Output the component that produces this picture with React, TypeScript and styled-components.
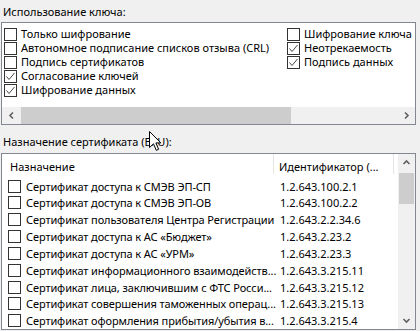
import styled, { createGlobalStyle } from 'styled-components'

const GlobalStyle = createGlobalStyle`
  body {
    margin: 0;
    background: #f0f0f0;
    font-family: "Noto Sans", "Open Sans", sans-serif;
    font-size: 11px;
    color: #000;
  }
`

const usageLeft = [
  { label: 'Только шифрование', checked: false },
  { label: 'Автономное подписание списков отзыва (CRL)', checked: false },
  { label: 'Подпись сертификатов', checked: false },
  { label: 'Согласование ключей', checked: true },
  { label: 'Шифрование данных', checked: true }
]

const usageRight = [
  { label: 'Шифрование ключа', checked: false },
  { label: 'Неотрекаемость', checked: true },
  { label: 'Подпись данных', checked: true }
]

const purposes = [
  ['Сертификат доступа к СМЭВ ЭП-СП', '1.2.643.100.2.1'],
  ['Сертификат доступа к СМЭВ ЭП-ОВ', '1.2.643.100.2.2'],
  ['Сертификат пользователя Центра Регистрации', '1.2.643.2.2.34.6'],
  ['Сертификат доступа к АС «Бюджет»', '1.2.643.2.23.2'],
  ['Сертификат доступа к АС «УРМ»', '1.2.643.2.23.3'],
  ['Сертификат информационного взаимодейств...', '1.2.643.3.215.11'],
  ['Сертификат лица, заключившим с ФТС Росси...', '1.2.643.3.215.12'],
  ['Сертификат совершения таможенных операц...', '1.2.643.3.215.13'],
  ['Сертификат оформления прибытия/убытия в...', '1.2.643.3.215.4']
]

function Check ({ checked }: { checked: boolean }) {
  return (
    <Box>
      {checked && (
        <svg width='11' height='11' viewBox='0 0 11 11'>
          <polyline points='1.5,5.5 4,8.5 9.5,2' fill='none' stroke='#4a4a4a' strokeWidth='1' />
        </svg>
      )}
    </Box>
  )
}

function Arrow ({ dir }: { dir: 'left' | 'right' | 'up' | 'down' }) {
  const pts = {
    left: '6,1.5 3,4.5 6,7.5',
    right: '3,1.5 6,4.5 3,7.5',
    up: '1.5,6 4.5,3 7.5,6',
    down: '1.5,3 4.5,6 7.5,3'
  }[dir]
  return (
    <svg width='9' height='9' viewBox='0 0 9 9'>
      <polyline points={pts} fill='none' stroke='#606060' strokeWidth='1.6' />
    </svg>
  )
}

export default function App () {
  return (
    <Page>
      <GlobalStyle />
      <GroupLabel>Использование ключа:</GroupLabel>
      <UsageBox>
        <UsageGrid>
          <Column>
            {usageLeft.map(i => (
              <UsageRow key={i.label}>
                <Check checked={i.checked} />
                <span>{i.label}</span>
              </UsageRow>
            ))}
          </Column>
          <Column>
            {usageRight.map(i => (
              <UsageRow key={i.label}>
                <Check checked={i.checked} />
                <span>{i.label}</span>
              </UsageRow>
            ))}
          </Column>
        </UsageGrid>
        <HScroll>
          <ScrollButton><Arrow dir='left' /></ScrollButton>
          <HThumb />
          <ScrollButton><Arrow dir='right' /></ScrollButton>
        </HScroll>
      </UsageBox>

      <GroupLabel $second>Назначение сертификата (EKU):</GroupLabel>
      <ListBox>
        <ListContent>
          <Header>
            <HeaderCell $width={272} $pad={8}>Назначение</HeaderCell>
            <HeaderCell $width={120} $pad={5}>Идентификатор (...</HeaderCell>
          </Header>
          {purposes.map(([name, oid]) => (
            <Row key={oid}>
              <NameCell>
                <Check checked={false} />
                <span>{name}</span>
              </NameCell>
              <OidCell>{oid}</OidCell>
            </Row>
          ))}
        </ListContent>
        <VScroll>
          <VButton><Arrow dir='up' /></VButton>
          <VThumb />
          <VTrack />
          <VButton><Arrow dir='down' /></VButton>
        </VScroll>
      </ListBox>

      <Cursor width='13' height='21' viewBox='0 0 13 21'>
        <path d='M0.5,0.5 L0.5,16.5 L4.5,12.8 L7.3,19.3 L9.6,18.3 L6.9,11.9 L11.8,11.9 Z' fill='#fff' stroke='#000' strokeWidth='1' />
      </Cursor>
    </Page>
  )
}

const Page = styled.div`
  position: relative;
  width: 420px;
  height: 331px;
  overflow: hidden;
`

const GroupLabel = styled.div<{ $second?: boolean }>`
  padding-left: 3px;
  line-height: 16px;
  margin-top: ${p => (p.$second ? '9px' : '4px')};
  margin-bottom: ${p => (p.$second ? '3px' : '2px')};
  white-space: nowrap;
`

const UsageBox = styled.div`
  margin-left: 1px;
  width: 413px;
  height: 101px;
  border: 1px solid #828790;
  background: #fff;
  display: flex;
  flex-direction: column;
`

const UsageGrid = styled.div`
  display: grid;
  grid-template-columns: 283px 1fr;
  padding: 4px 0 0 2px;
  flex: 1;
`

const Column = styled.div`
  display: flex;
  flex-direction: column;
`

const UsageRow = styled.div`
  display: flex;
  align-items: center;
  gap: 4px;
  height: 14px;
  line-height: 14px;
  white-space: nowrap;
`

const Box = styled.span`
  box-sizing: border-box;
  flex: none;
  width: 13px;
  height: 13px;
  border: 1px solid #333;
  background: #fff;
  display: flex;
  align-items: center;
  justify-content: center;
`

const HScroll = styled.div`
  display: flex;
  height: 17px;
  background: #f0f0f0;
`

const ScrollButton = styled.div`
  width: 18px;
  flex: none;
  display: flex;
  align-items: center;
  justify-content: center;
`

const HThumb = styled.div`
  width: 270px;
  background: #cdcdcd;
  margin: 0 auto 0 1px;
`

const ListBox = styled.div`
  margin-left: 1px;
  width: 413px;
  height: 175px;
  border: 1px solid #828790;
  background: #fff;
  display: flex;
`

const ListContent = styled.div`
  flex: 1;
  min-width: 0;
  display: flex;
  flex-direction: column;
`

const Header = styled.div`
  display: flex;
  height: 24px;
`

const HeaderCell = styled.div<{ $width: number; $pad: number }>`
  width: ${p => p.$width}px;
  padding-left: ${p => p.$pad}px;
  box-sizing: border-box;
  height: 20px;
  line-height: 25px;
  border-right: 1px solid #e5e5e5;
  white-space: nowrap;
  overflow: hidden;
`

const Row = styled.div`
  display: flex;
  align-items: center;
  height: 17px;
  white-space: nowrap;
`

const NameCell = styled.div`
  width: 274px;
  flex: none;
  box-sizing: border-box;
  padding-left: 6px;
  display: flex;
  align-items: center;
  gap: 5px;
  overflow: hidden;
  letter-spacing: -0.1px;
`

const OidCell = styled.div`
  padding-left: 4px;
`

const VScroll = styled.div`
  width: 17px;
  flex: none;
  background: #f0f0f0;
  display: flex;
  flex-direction: column;
`

const VButton = styled.div`
  height: 17px;
  display: flex;
  align-items: center;
  justify-content: center;
`

const VThumb = styled.div`
  height: 31px;
  margin: 2px 1px 0;
  background: #cdcdcd;
`

const VTrack = styled.div`
  flex: 1;
`

const Cursor = styled.svg`
  position: absolute;
  left: 149px;
  top: 131px;
`
